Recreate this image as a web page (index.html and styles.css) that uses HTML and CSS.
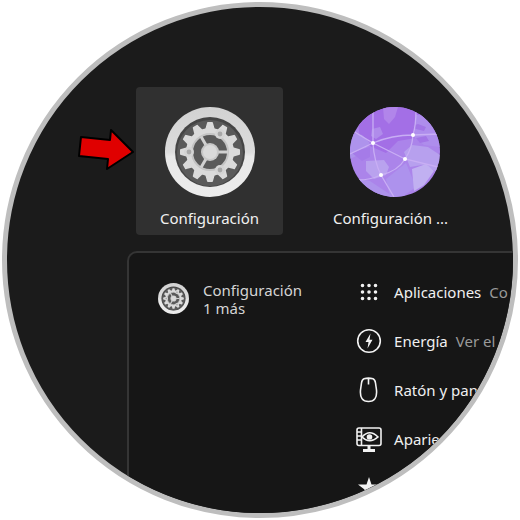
FILE: index.html
```html
<!DOCTYPE html>
<html lang="es">
<head>
    <meta charset="UTF-8">
    <meta name="viewport" content="width=device-width, initial-scale=1.0">
    <title>Configuración</title>
    <link rel="stylesheet" href="styles.css">
</head>
<body>

    <!-- shared gear icon -->
    <svg class="defs" width="0" height="0" aria-hidden="true">
        <defs>
            <linearGradient id="rim" x1="0" y1="0" x2="0" y2="1">
                <stop offset="0" stop-color="#d2d2d2"/>
                <stop offset="0.5" stop-color="#dcdcdc"/>
                <stop offset="0.55" stop-color="#e8e8e8"/>
                <stop offset="1" stop-color="#ececec"/>
            </linearGradient>
            <path id="tooth" d="M40 23L42 16Q42 15 43 15H47Q48 15 48 16L50 23Z"/>
            <g id="teeth">
                <use href="#tooth"/>
                <use href="#tooth" transform="rotate(30 45 45)"/>
                <use href="#tooth" transform="rotate(60 45 45)"/>
                <use href="#tooth" transform="rotate(90 45 45)"/>
            </g>
            <symbol id="gear" viewBox="0 0 90 90">
                <circle cx="45" cy="45" r="45" fill="url(#rim)"/>
                <circle cx="45" cy="45" r="35" fill="#454545"/>
                <circle cx="45" cy="46" r="33" fill="#5a5a5a"/>
                <g fill="#dadada">
                    <use href="#teeth"/>
                    <use href="#teeth" transform="rotate(120 45 45)"/>
                    <use href="#teeth" transform="rotate(240 45 45)"/>
                </g>
                <circle cx="45" cy="45" r="21" fill="none" stroke="#dadada" stroke-width="6"/>
                <circle cx="45" cy="45" r="18" fill="none" stroke="#c4c4c4" stroke-width="2"/>
                <path d="M45 45H63M45 45L36 29.4M45 45L36 60.6" stroke="#d0d0d0" stroke-width="3"/>
                <g fill="#d4d4d4">
                    <circle cx="24" cy="45" r="5"/>
                    <circle cx="55" cy="27" r="5"/>
                    <circle cx="55" cy="63" r="5"/>
                </g>
                <g fill="#a8a8a8">
                    <circle cx="24" cy="45" r="2.4"/>
                    <circle cx="55" cy="27" r="2.4"/>
                    <circle cx="55" cy="63" r="2.4"/>
                </g>
                <circle cx="45" cy="45" r="9" fill="#c8c8c8"/>
                <circle cx="45" cy="45" r="7" fill="#dadada"/>
            </symbol>
        </defs>
    </svg>

    <main class="lens">
        <div class="apps">
            <button class="app selected" type="button">
                <svg class="app-icon" aria-hidden="true"><use href="#gear"/></svg>
                <span>Configuración</span>
            </button>
            <button class="app" type="button">
                <svg class="app-icon" viewBox="0 0 90 90" aria-hidden="true">
                    <clipPath id="globe"><circle cx="45" cy="45" r="45"/></clipPath>
                    <g clip-path="url(#globe)">
                        <rect width="90" height="90" fill="#ab84ea"/>
                        <path d="M15 0H78L72 20L66 31L48 34L36 46L22 40L10 34L8 14Z" fill="#a36fe6"/>
                        <path d="M33 0H48L45 10L39 17L34 12Z" fill="#b185ea"/>
                        <path d="M0 26L12 28L20 36L12 46L0 52Z" fill="#ae93ec"/>
                        <path d="M22 22L30 20L33 27L26 32L21 29Z" fill="#b08ceb"/>
                        <path d="M66 8L78 6L90 20V40L74 38L64 30Z" fill="#ae8dec"/>
                        <path d="M62 19L68 17L76 20L74 24L66 22ZM66 31L76 29L79 34L70 36Z" fill="#a375e6"/>
                        <path d="M2 46L12 42L20 40L20 50L12 54Z" fill="#a57be8"/>
                        <path d="M16 54L34 53L39 60L36 68L24 72L16 64Z" fill="#b9a2ee"/>
                        <path d="M54 45L62 38L78 40L90 48V66L72 58L60 60Z" fill="#b7a0ee"/>
                        <path d="M36 72L56 56L66 80L52 90H40Z" fill="#ad92ed"/>
                        <path d="M0 70L20 74L44 90H10Z" fill="#ae93ec"/>
                        <path d="M62 62L76 57L84 64L74 78L64 84Z" fill="#c1b0f1"/>
                    </g>
                    <g clip-path="url(#globe)" fill="none" stroke="#c8aef4" stroke-width="1.3">
                        <path d="M23 0V36L3 24M23 36L0 47M23 36Q42 28 63 28L90 27M66 3Q66 18 63 28Q62 42 55 52M23 36L55 52L88 60M23 36Q24 54 31 68L44 90M8 73Q20 73 31 68Q48 64 55 52"/>
                    </g>
                    <g fill="#fff">
                        <circle cx="23" cy="36" r="2"/>
                        <circle cx="63" cy="28" r="2"/>
                        <circle cx="55" cy="52" r="2"/>
                        <circle cx="31" cy="68" r="2"/>
                    </g>
                </svg>
                <span class="truncated">Configuración ...</span>
            </button>
            <svg class="arrow" viewBox="0 0 58 44" aria-hidden="true">
                <path d="M3 9L32 12L33 2L55 24L29 41L30 31L1 28Z" fill="#e00000" stroke="#000" stroke-width="2" stroke-linejoin="round"/>
            </svg>
        </div>

        <section class="results">
            <div class="provider">
                <svg class="provider-icon" aria-hidden="true"><use href="#gear"/></svg>
                <p>Configuración<br>1 más</p>
            </div>
            <div class="list">
                <button class="result" type="button">
                    <svg class="result-icon" viewBox="0 0 26 26" aria-hidden="true">
                        <path d="M6.500 6.500h.01M13 6.500h.01M19.500 6.500h.01M6.500 13h.01M13 13h.01M19.500 13h.01M6.500 19.500h.01M13 19.500h.01M19.500 19.500h.01" stroke="#f2f2f2" stroke-width="3.600" stroke-linecap="round"/>
                    </svg>
                    <span>Aplicaciones</span>
                    <span class="about">Co</span>
                </button>
                <button class="result" type="button">
                    <svg class="result-icon" viewBox="0 0 26 26" aria-hidden="true">
                        <circle cx="13" cy="13" r="11.300" fill="none" stroke="#f2f2f2" stroke-width="1.600"/>
                        <path d="M14.500 5.500L9.500 14H12.500L11.500 20.500L16.500 11.800H13.500Z" fill="#f2f2f2"/>
                    </svg>
                    <span>Energía</span>
                    <span class="about">Ver el e</span>
                </button>
                <button class="result" type="button">
                    <svg class="result-icon" viewBox="0 0 26 26" fill="none" stroke="#f2f2f2" stroke-width="1.600" aria-hidden="true">
                        <path d="M8 1.800Q12.500 .5 17 1.800Q19 2.500 19.500 6L20.500 13Q21.500 24.500 12.500 24.500Q3.500 24.500 4.500 13L5.500 6Q6 2.500 8 1.800ZM12.500 1.500V7.500"/>
                    </svg>
                    <span>Ratón y pan</span>
                </button>
                <button class="result" type="button">
                    <svg class="result-icon" viewBox="0 0 26 26" fill="none" stroke="#f2f2f2" stroke-width="1.600" aria-hidden="true">
                        <rect x="1" y="2" width="24" height="17.500" rx="2"/>
                        <path d="M5.500 2V19M1 6H5.500M1 10H5.500M1 14H5.500"/>
                        <path d="M6 11Q13.500 2.500 22 11Q13.500 18.500 6 11Z"/>
                        <circle cx="13.500" cy="11" r="2" fill="#f2f2f2"/>
                        <path d="M13 20V23M7 24.500H19" stroke-width="3"/>
                    </svg>
                    <span>Aparie</span>
                </button>
                <button class="result" type="button" aria-label="Favoritos">
                    <svg class="result-icon" viewBox="0 0 26 26" fill="#f2f2f2" aria-hidden="true">
                        <path d="M13 2L15.500 9.500H24L17.500 14.500L20 23L13 18L6 23L8.500 14.500L2 9.500H10.500Z"/>
                    </svg>
                </button>
            </div>
        </section>
    </main>

</body>
</html>
```

FILE: styles.css
```css
* {
    box-sizing: border-box;
}
body {
    margin: 0;
    padding: 2px;
    background-color: #fff;
    font-family: "Noto Sans", "Open Sans", sans-serif;
    font-size: 15px;
    color: #f0f0f0;
}
.defs {
    position: absolute;
}
button {
    padding: 0;
    border: none;
    background: none;
    color: inherit;
    font: inherit;
    cursor: pointer;
}
.lens {
    display: flex;
    flex-direction: column;
    gap: 16px;
    aspect-ratio: 1;
    min-height: 0;
    padding: 80px 0 0 120px;
    border: 5px solid #bebebe;
    border-radius: 50%;
    background-color: #1b1b1b;
    overflow: hidden;
}
.apps {
    position: relative;
    display: flex;
    gap: 38px;
    padding-left: 9px;
}
.app {
    display: flex;
    flex-direction: column;
    align-items: center;
    gap: 11px;
    flex: none;
    width: 147px;
    height: 148px;
    padding-top: 20px;
    border-radius: 4px;
    line-height: 20px;
    white-space: nowrap;
}
.app.selected {
    background-color: #303030;
}
.app-icon {
    width: 90px;
    height: 90px;
}
.truncated {
    padding-right: 8px;
}
.arrow {
    position: absolute;
    left: -49px;
    top: 41px;
    width: 58px;
    height: 44px;
}
.results {
    display: flex;
    flex: 1;
    gap: 54px;
    min-height: 0;
    padding: 14px 0 0 29px;
    border: 2px solid #353535;
    border-right: none;
    border-bottom: none;
    border-top-left-radius: 10px;
    background-color: #161616;
    overflow: hidden;
}
.provider {
    display: flex;
    gap: 14px;
    flex: none;
    padding-top: 14px;
    line-height: 18px;
    color: #d4d4d4;
}
.provider p {
    margin: 0;
}
.provider-icon {
    width: 31px;
    height: 31px;
    margin-top: 2px;
}
.list {
    flex: none;
}
.result {
    display: flex;
    align-items: center;
    height: 49px;
    white-space: nowrap;
}
.result-icon {
    width: 26px;
    height: 26px;
    margin-right: 12px;
}
.about {
    margin-left: 8px;
    color: #9a9a9a;
}
```
